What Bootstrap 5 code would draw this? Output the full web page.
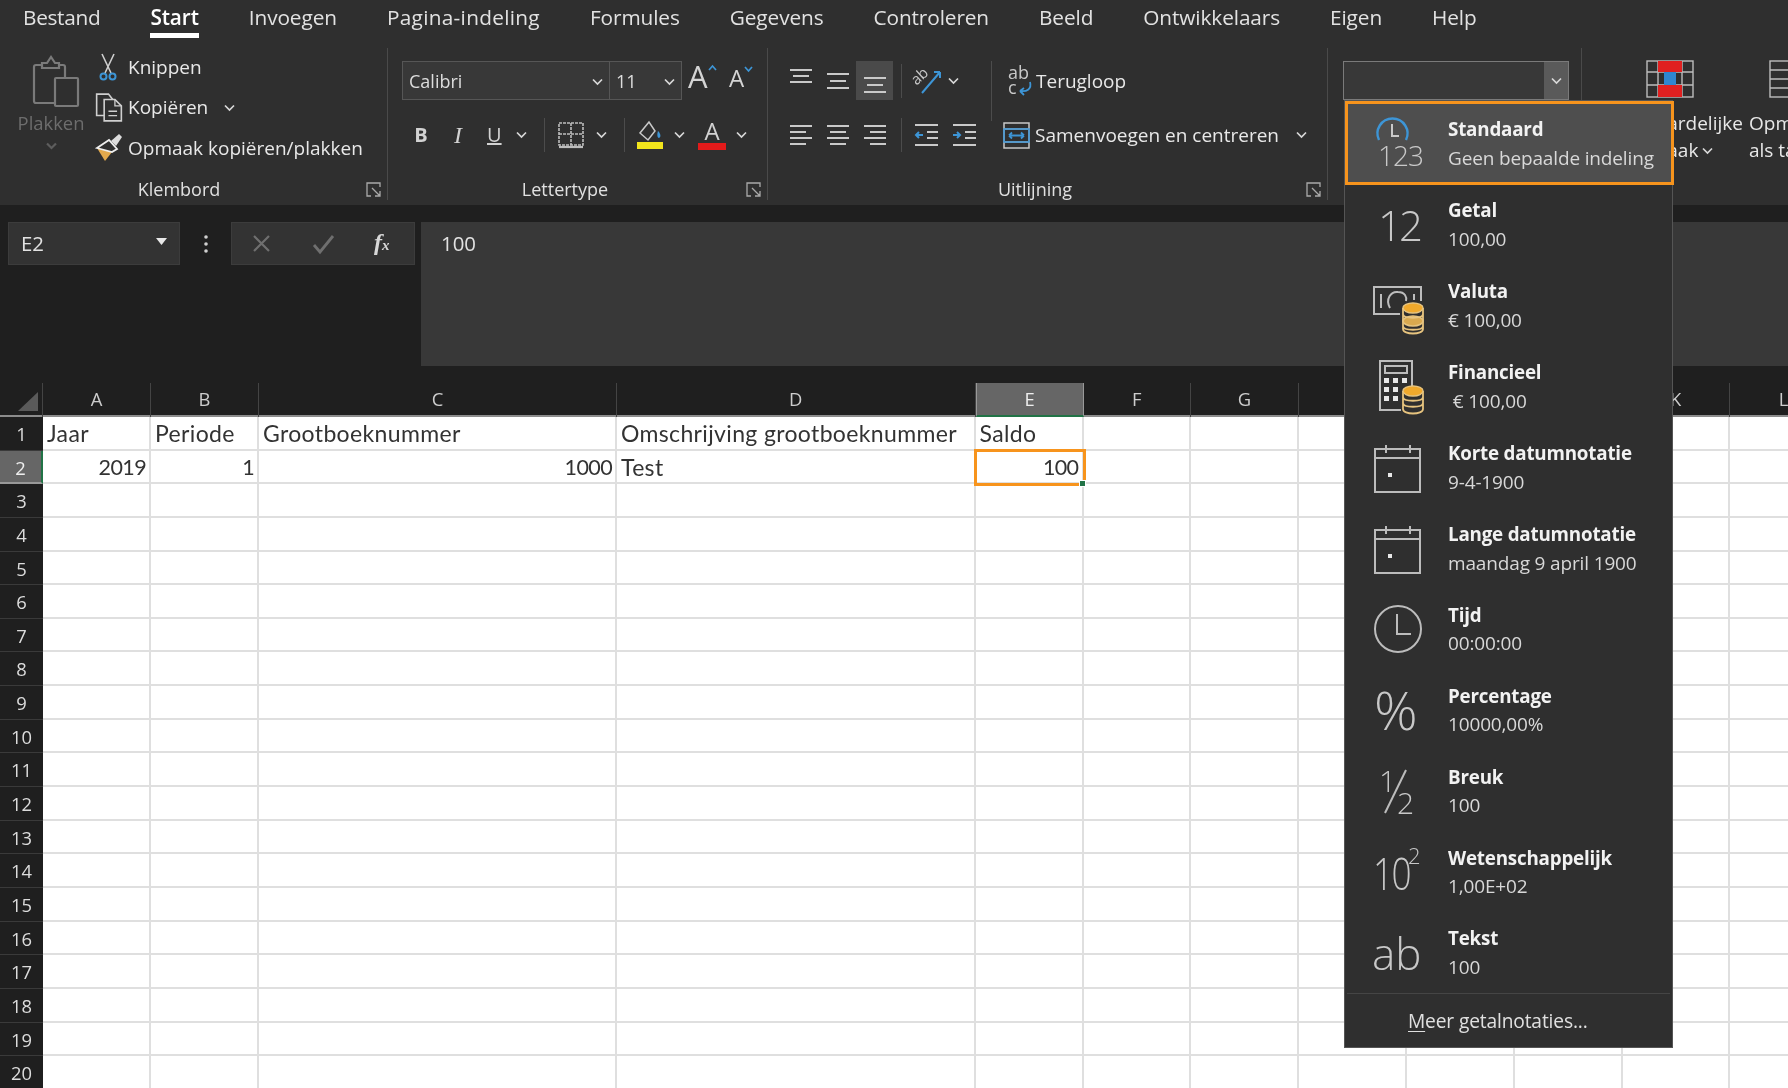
<!DOCTYPE html>
<html lang="nl">
<head>
<meta charset="utf-8">
<title>Excel</title>
<link href="https://cdn.jsdelivr.net/npm/bootstrap@5.3.0/dist/css/bootstrap.min.css" rel="stylesheet">
<style>
html,body{margin:0;height:1088px;overflow:hidden;background:#fff}
body{font-family:"Open Sans","Noto Sans",sans-serif;color:#e8e8e8;font-size:19px;line-height:1.2}
.app{width:1788px;height:1088px;overflow:hidden;filter:blur(.55px)}
svg{overflow:visible}
.chev{width:11px;height:8px;flex:none;fill:none;stroke:#d8d8d8;stroke-width:1.7}
/* tabs */
.tabs{height:48px;background:#2f2f2f;padding:4px 0 0 23px;gap:50px;font-size:20.8px;letter-spacing:-.1px}
.tab{height:34px;color:#e2e2e2;line-height:26px;white-space:nowrap}
.tab.on{color:#fff;border-bottom:5px solid #fff;font-weight:600}
.tab.tight{letter-spacing:-.3px}
.tab.wide{letter-spacing:.3px}
/* ribbon */
.ribbon{height:157px;background:#2f2f2f;overflow:hidden}
.rg{flex:none;height:152px;border-right:1px solid #4a4a4a}
.rg-body{height:129px}
.rg-label{height:23px;font-size:18px;color:#e0e0e0;padding-top:2px}
.rg-label span{flex:1;text-align:center;line-height:23px}
.launcher{width:16px;height:15px;margin-right:5px;flex:none;fill:none;stroke:#aaa;stroke-width:1.3}
.g-clip{width:388px}.g-font{width:380px}.g-align{width:560px}.g-num{width:254px}
.paste{width:68px;margin:7px 0 0 17px;color:#6d6d6d;font-size:18.4px}
.paste svg{fill:none;stroke:#7a7a7a;stroke-width:2.2;margin-left:16px;display:block}
.paste div{margin-top:4px;text-align:center}
.small-col{margin-left:10px;margin-top:-1px}
.small-row{height:40.5px;white-space:nowrap}
.small-row .ic{width:33px;flex:none;display:flex;justify-content:flex-start}
.combo{height:39px;background:#383838;border:1.5px solid #565656;color:#ddd;font-size:18px;padding-top:2px!important}
.combo.font{width:208px;padding:0 6px}.combo.size{width:72px;padding:0 6px;border-left:0}
.combo .chev{margin-left:auto}
.row1{height:39px;margin-top:13px}
.row2{height:30px;margin-top:20px}
.sep{width:1px;height:34px;background:#4c4c4c;flex:none}
.grow{line-height:1;color:#d4d4d4}
.fmt{width:14px;text-align:center;font-family:"Liberation Serif",serif;font-size:24px;color:#d2d2d2;line-height:28px}
.al{width:37px;height:39px;display:flex;align-items:center;justify-content:center;flex:none}
.al.on{background:#4a4a4a}
.al svg{fill:none;stroke:#c9c9c9;stroke-width:2.2}
.numcombo{width:226px;height:39px;margin:13px 0 0 15px;background:#383838;border:1.5px solid #7a7a7a}
.numcombo b{width:24px;background:#5a5a5a;margin-left:auto;display:flex;align-items:center;justify-content:center}
.bigbtn{flex:none;text-align:center;font-size:19px;line-height:27px;padding-top:12px;white-space:nowrap}
.bigbtn svg.big{display:block;margin:0 auto 12px}
/* formula bar */
.fx{height:178px;background:#1f1f1f;padding:17px 0 17px 8px;color:#e2e2e2;font-size:20.4px}
.namebox{width:172px;height:43px;background:#333;padding:0 12px;border:1px solid #3c3c3c}
.dots{width:51px;height:43px}
.fxbtns{width:184px;height:43px;background:#333;border:1px solid #3c3c3c}
.fxinput{flex:1;height:144px;margin-left:6px;background:#383838;padding:9px 20px;line-height:24px}
/* sheet */
.sheet{background:#1f1f1f}
.line{display:grid;grid-template-columns:43px 108px 108px 358px 358.5px 108px 107.5px 108px 108px 107.5px 108px 107.5px 108px;width:1838px}
.head{height:34px;border-bottom:2px solid #8c8c8c}
.head span{text-align:center;color:#cdcdcd;font-size:18.4px;line-height:32px;border-right:1.5px solid #444}
.head .sel{background:#666;color:#eee;border-bottom:2px solid #217346;height:34px;border-left:1.5px solid #999;border-right:1.5px solid #999}
.corner{padding:9px 0 0 18px}
.corner svg{display:block;fill:#5a5a5a}
.line.r{height:33.65px}
.r>span{height:33.65px;background:#fff;color:#333;border-right:2px solid #dfdfdf;border-bottom:2px solid #dfdfdf;padding:0 4px;line-height:33px;white-space:nowrap;position:relative;font-family:Lato,"Open Sans",sans-serif;font-size:23px;letter-spacing:.35px}
.r>span.n{text-align:right;font-size:21.5px;letter-spacing:-.6px;padding-right:3px}
.r>span.rh{background:#1f1f1f;color:#dcdcdc;text-align:center;padding:0;border-right:0;border-bottom:1.5px solid #3a3a3a;font-family:"Open Sans",sans-serif;font-size:18.4px;letter-spacing:0}
.r>span.rh.sel{background:#666;color:#eee;border-right:2px solid #217346;border-bottom:2px solid #999}
.cellsel{outline:3px solid #f7941d;outline-offset:-1px;z-index:2}
.handle{position:absolute;right:-4px;bottom:-5px;width:7px;height:7px;background:#217346;border:1px solid #fff}
/* number-format menu */
.menu-num{position:absolute;left:1344px;top:100px;width:329px;height:948px;margin:0;padding:0;background:#2f2f2f;border:1px solid #555;border-radius:0;color:#e6e6e6;z-index:5;display:block}
.menu-num .dropdown-item{height:80.9px;padding:0 0 0 28px;color:inherit;white-space:nowrap;background:transparent}
.menu-num .dropdown-item.cur{height:83.5px;width:calc(100% + 2px);background:#4e4e4e;border:3px solid #f7941d;padding:2px 0 0 25px}
.mi-ic{width:52px;height:56px;flex:none;margin-right:23px;overflow:visible;fill:none;stroke:#bcbcbc;stroke-width:2}
.mi-ic text{fill:#c8c8c8;stroke:none;font-family:"Open Sans",sans-serif;font-weight:300}
.mi-t{font-weight:700;font-size:18.8px;line-height:28.5px;color:#f2f2f2;letter-spacing:-.2px}
.mi-s{font-size:19px;line-height:28.5px;color:#d8d8d8;letter-spacing:-.15px}
.menu-sep{border-top:1px solid #454545;margin:0 0 0 2px;width:323px}
.menu-more{height:51px;line-height:54px;padding-left:63px;font-size:19.2px;color:#e0e0e0;letter-spacing:-.15px}
.menu-more u{text-underline-offset:3px}
</style>
</head>
<body>
<div class="app position-relative">

<nav class="tabs d-flex">
  <span class="tab tight">Bestand</span><span class="tab on">Start</span><span class="tab">Invoegen</span><span class="tab wide">Pagina-indeling</span><span class="tab">Formules</span><span class="tab">Gegevens</span><span class="tab">Controleren</span><span class="tab">Beeld</span><span class="tab">Ontwikkelaars</span><span class="tab">Eigen</span><span class="tab">Help</span>
</nav>

<div class="ribbon d-flex">
  <!-- Klembord -->
  <section class="rg g-clip d-flex flex-column">
    <div class="rg-body d-flex">
      <div class="paste">
        <svg width="47" height="53" viewBox="0 0 47 53"><path d="M22 48H3a2 2 0 0 1-2-2V12a2 2 0 0 1 2-2h6M26 10h4a2 2 0 0 1 2 2v10"/><path d="M9 13V8h5l4-6 4 6h4v5z"/><rect x="22" y="23" width="23" height="28" rx="1"/></svg>
        <div>Plakken</div>
        <div class="mt-2 d-flex justify-content-center"><svg class="chev m-0" viewBox="0 0 11 8" style="stroke:#5d5d5d"><path d="M1 1.5l4.5 4.5L10 1.5"/></svg></div>
      </div>
      <div class="small-col d-flex flex-column">
        <div class="small-row d-flex align-items-center"><span class="ic"><svg style="margin-left:4px" width="18" height="28" viewBox="0 0 18 28" fill="none" stroke="#cfcfcf" stroke-width="1.6"><path d="M3 1l9 19M15 1L6 20"/><circle cx="4.5" cy="23.5" r="3" stroke="#3d95d6" stroke-width="2"/><circle cx="13.5" cy="23.5" r="3" stroke="#3d95d6" stroke-width="2"/></svg></span>Knippen</div>
        <div class="small-row d-flex align-items-center"><span class="ic"><svg width="28" height="29" viewBox="1 1 25 27" fill="none" stroke="#cfcfcf" stroke-width="1.5"><path d="M9 22H2V2h11l4 5"/><path d="M9 7h10l6 6v14H9z"/><path d="M19 7v6h6M13 18h8M13 22h8" stroke-width="1.2"/></svg></span>Kopiëren<svg class="chev ms-3" viewBox="0 0 11 8"><path d="M1 1.5l4.5 4.5L10 1.5"/></svg></div>
        <div class="small-row d-flex align-items-center"><span class="ic"><svg width="28" height="28" viewBox="0 0 28 28" fill="none"><path d="M2 14l8 13 7-9z" fill="#e2a94d"/><path d="M2 14L14 6l8 9-5 3z" fill="#2f2f2f" stroke="#eee" stroke-width="1.8"/><path d="M16 7l8-7 3 3-6 9z" fill="#dcdcdc"/></svg></span>Opmaak kopiëren/plakken</div>
      </div>
    </div>
    <div class="rg-label d-flex align-items-center"><span class="me-2">Klembord</span><svg class="launcher" viewBox="0 0 16 15"><path d="M14 5V1H1v13h4M6 6l8 8M14 9v5H9"/></svg></div>
  </section>

  <!-- Lettertype -->
  <section class="rg g-font d-flex flex-column">
    <div class="rg-body ps-3">
      <div class="row1 d-flex align-items-center" style="margin-left:-2px">
        <div class="combo font d-flex align-items-center">Calibri<svg class="chev" viewBox="0 0 11 8"><path d="M1 1.5l4.5 4.5L10 1.5"/></svg></div>
        <div class="combo size d-flex align-items-center">11<svg class="chev" viewBox="0 0 11 8"><path d="M1 1.5l4.5 4.5L10 1.5"/></svg></div>
        <span class="grow d-flex align-items-start" style="width:38px;margin:-8px 0 0 6px;font-size:31px">A<svg width="9" height="6" viewBox="0 0 9 6" class="mt-1" fill="none" stroke="#3d95d6" stroke-width="1.7"><path d="M1 5l3.5-4L8 5"/></svg></span>
        <span class="grow d-flex align-items-start" style="margin:-6px 0 0 3px;font-size:24px">A<svg width="9" height="6" viewBox="0 0 9 6" fill="none" stroke="#3d95d6" stroke-width="1.7"><path d="M1 1l3.5 4L8 1"/></svg></span>
      </div>
      <div class="row2 d-flex align-items-center" style="padding-left:10px">
        <span class="fmt fw-bold" style="font-family:'Open Sans',sans-serif;font-size:20px">B</span>
        <span class="fmt fst-italic" style="margin-left:23px">I</span>
        <span class="fmt text-decoration-underline" style="margin-left:22px;font-family:'Open Sans',sans-serif;font-size:20px">U</span>
        <svg class="chev" style="margin-left:15px" viewBox="0 0 11 8"><path d="M1 1.5l4.5 4.5L10 1.5"/></svg>
        <span class="sep" style="margin-left:17px"></span>
        <svg style="margin-left:13px" width="26" height="27" viewBox="0 0 26 27" fill="none" stroke="#bdbdbd" stroke-width="1.6"><path d="M1 1h24v22H1z" stroke-dasharray="3 1"/><path d="M13 1v22M1 12h24" stroke-dasharray="3 1"/><path d="M1 25h24" stroke-width="2.2"/></svg>
        <svg class="chev" style="margin-left:12px" viewBox="0 0 11 8"><path d="M1 1.5l4.5 4.5L10 1.5"/></svg>
        <span class="sep" style="margin-left:17px"></span>
        <svg style="margin-left:12px" width="26" height="30" viewBox="0 0 26 30" fill="none" stroke="#c9c9c9" stroke-width="1.5"><path d="M12 2L3 13l8 7 7-9z"/><path d="M21 11c3 3 3 6 1 7-2 0-2-4-1-7z" fill="#3d95d6" stroke="none"/><rect y="22" width="26" height="7" fill="#f2e51c" stroke="none"/></svg>
        <svg class="chev" style="margin-left:11px" viewBox="0 0 11 8"><path d="M1 1.5l4.5 4.5L10 1.5"/></svg>
        <span class="d-flex flex-column align-items-center" style="width:28px;margin-left:13px;line-height:22px;font-size:24px;color:#d2d2d2">A<i class="d-block" style="width:28px;height:7px;background:#e31a1a;margin-top:1px"></i></span>
        <svg class="chev" style="margin-left:10px" viewBox="0 0 11 8"><path d="M1 1.5l4.5 4.5L10 1.5"/></svg>
      </div>
    </div>
    <div class="rg-label d-flex align-items-center"><span class="me-1">Lettertype</span><svg class="launcher" viewBox="0 0 16 15"><path d="M14 5V1H1v13h4M6 6l8 8M14 9v5H9"/></svg></div>
  </section>

  <!-- Uitlijning -->
  <section class="rg g-align d-flex flex-column">
    <div class="rg-body" style="padding-left:14px">
      <div class="row1 d-flex align-items-center">
        <span class="al"><svg width="24" height="26" viewBox="0 0 24 26"><path d="M1 2h22M4 8h16M1 14h22"/></svg></span>
        <span class="al"><svg width="24" height="26" viewBox="0 0 24 26"><path d="M1 6h22M4 13h16M1 20h22"/></svg></span>
        <span class="al on"><svg width="24" height="26" viewBox="0 0 24 26"><path d="M1 10h22M4 17h16M1 24h22"/></svg></span>
        <span class="sep" style="margin-left:8px"></span>
        <svg style="margin-left:11px" width="30" height="28" viewBox="0 0 30 28" fill="none"><text x="0" y="14" font-size="15" fill="#c9c9c9" transform="rotate(-42 8 12)">ab</text><path d="M9 26L27 5M27 5h-6M27 5v6" stroke="#3d95d6" stroke-width="2"/></svg>
        <svg class="chev" style="margin-left:5px" viewBox="0 0 11 8"><path d="M1 1.5l4.5 4.5L10 1.5"/></svg>
        <span class="sep" style="margin-left:32px;height:60px;align-self:flex-start"></span>
        <svg style="margin-left:15px" width="26" height="32" viewBox="0 0 26 32" fill="none" stroke="#3d95d6" stroke-width="1.8"><text x="1" y="14" font-size="18" fill="#c9c9c9" stroke="none">ab</text><text x="1" y="29" font-size="18" fill="#c9c9c9" stroke="none">c</text><path d="M23 17c2 7-3 10-10 9M13 26l4-3M13 26l4 4"/></svg>
        <span style="margin-left:3px;padding-top:2px">Terugloop</span>
      </div>
      <div class="row2 d-flex align-items-center">
        <span class="al"><svg width="24" height="26" viewBox="0 0 24 26"><path d="M1 4h22M1 10h16M1 16h22M1 22h16"/></svg></span>
        <span class="al"><svg width="24" height="26" viewBox="0 0 24 26"><path d="M1 4h22M4 10h16M1 16h22M4 22h16"/></svg></span>
        <span class="al"><svg width="24" height="26" viewBox="0 0 24 26"><path d="M1 4h22M7 10h16M1 16h22M7 22h16"/></svg></span>
        <span class="sep" style="margin-left:8px"></span>
        <svg style="margin-left:12px" width="25" height="26" viewBox="0 0 25 26" fill="none" stroke="#c9c9c9" stroke-width="2"><path d="M1 3h23M13 10h11M13 16h11M1 23h23"/><path d="M9 13H2M5 10l-3 3 3 3" stroke="#3d95d6"/></svg>
        <svg style="margin-left:13px" width="25" height="26" viewBox="0 0 25 26" fill="none" stroke="#c9c9c9" stroke-width="2"><path d="M1 3h23M13 10h11M13 16h11M1 23h23"/><path d="M1 13h7M5 10l3 3-3 3" stroke="#3d95d6"/></svg>
        <span class="sep" style="margin-left:14px;visibility:hidden"></span>
        <svg style="margin-left:11px" width="27" height="27" viewBox="0 0 27 27" fill="none" stroke="#c9c9c9" stroke-width="1.5"><rect x="1" y="1" width="25" height="25"/><path d="M1 7h25M1 20h25"/><rect x="1" y="7" width="25" height="13" stroke="#3d95d6"/><path d="M6 13.5h15M6 13.5l3-3M6 13.5l3 3M21 13.5l-3-3M21 13.5l-3 3" stroke="#3d95d6" stroke-width="1.8"/></svg>
        <span style="margin-left:5px;white-space:nowrap">Samenvoegen en centreren</span>
        <svg class="chev" style="margin-left:17px" viewBox="0 0 11 8"><path d="M1 1.5l4.5 4.5L10 1.5"/></svg>
      </div>
    </div>
    <div class="rg-label d-flex align-items-center"><span class="me-1">Uitlijning</span><svg class="launcher" viewBox="0 0 16 15"><path d="M14 5V1H1v13h4M6 6l8 8M14 9v5H9"/></svg></div>
  </section>

  <!-- Getal -->
  <section class="rg g-num">
    <div class="numcombo d-flex"><b><svg class="chev" viewBox="0 0 11 8"><path d="M1 1.5l4.5 4.5L10 1.5"/></svg></b></div>
  </section>

  <!-- Stijlen -->
  <section class="d-flex" style="padding-left:18px">
    <div class="bigbtn" style="width:140px">
      <svg class="big" width="48" height="38" viewBox="0 0 48 38" fill="none" stroke="#bdbdbd" stroke-width="1.4"><rect x="1" y="1" width="46" height="36"/><path d="M12 1v36M36 1v36M1 12h46M1 25h46"/><rect x="12" y="1" width="24" height="11" fill="#e02020" stroke="none"/><rect x="12" y="25" width="24" height="12" fill="#e02020" stroke="none"/><rect x="18" y="12" width="12" height="13" fill="#2f86d0" stroke="none"/></svg>
      Voorwaardelijke<br><span class="d-inline-flex align-items-center gap-1">opmaak<svg class="chev" viewBox="0 0 11 8"><path d="M1 1.5l4.5 4.5L10 1.5"/></svg></span>
    </div>
    <div class="bigbtn" style="width:86px;margin-left:9px">
      <svg class="big" width="46" height="38" viewBox="0 0 46 38" fill="none" stroke="#bdbdbd" stroke-width="1.4"><rect x="1" y="1" width="44" height="36"/><path d="M1 10h44M1 19h44M1 28h44M23 1v36"/><path d="M23 19h22" stroke="#3d95d6" stroke-width="2"/></svg>
      Opmaken<br><span class="d-inline-flex align-items-center gap-1">als tabel<svg class="chev" viewBox="0 0 11 8"><path d="M1 1.5l4.5 4.5L10 1.5"/></svg></span>
    </div>
  </section>
</div>

<!-- Formulebalk -->
<div class="fx d-flex">
  <div class="namebox d-flex align-items-center justify-content-between">E2<svg width="11" height="7" class="mb-1" viewBox="0 0 13 8" fill="#e8e8e8"><path d="M0 0h13L6.5 8z"/></svg></div>
  <div class="dots d-flex flex-column align-items-center justify-content-center gap-1"><svg width="4" height="18" viewBox="0 0 4 18" fill="#d0d0d0"><circle cx="2" cy="2" r="1.8"/><circle cx="2" cy="9" r="1.8"/><circle cx="2" cy="16" r="1.8"/></svg></div>
  <div class="fxbtns d-flex align-items-center">
    <svg style="margin-left:20px" width="19" height="19" viewBox="0 0 19 19" fill="none" stroke="#6f6f6f" stroke-width="2.2"><path d="M2 2l15 15M17 2L2 17"/></svg>
    <svg style="margin-left:41px" width="23" height="20" viewBox="0 0 23 20" fill="none" stroke="#6f6f6f" stroke-width="2.8"><path d="M2 11l6 7L21 2"/></svg>
    <span class="fst-italic fw-bold" style="margin-left:39px;font-family:'Liberation Serif',serif;font-size:24px;line-height:24px;color:#d8d8d8">f<small style="font-size:15px">x</small></span>
  </div>
  <div class="fxinput">100</div>
</div>

<!-- Werkblad -->
<div class="sheet">
  <div class="line head">
    <span class="corner"><svg width="20" height="19" viewBox="0 0 20 19"><path d="M20 0v19H0z"/></svg></span>
    <span>A</span><span>B</span><span>C</span><span>D</span><span class="sel">E</span><span>F</span><span>G</span><span></span><span></span><span></span><span>K</span><span>L</span>
  </div>
  <div class="line r"><span class="rh">1</span><span>Jaar</span><span>Periode</span><span>Grootboeknummer</span><span>Omschrijving grootboeknummer</span><span>Saldo</span><span></span><span></span><span></span><span></span><span></span><span></span><span></span></div>
  <div class="line r"><span class="rh sel">2</span><span class="n">2019</span><span class="n">1</span><span class="n">1000</span><span>Test</span><span class="n cellsel">100<i class="handle"></i></span><span></span><span></span><span></span><span></span><span></span><span></span><span></span></div>
  <div class="line r"><span class="rh">3</span><span></span><span></span><span></span><span></span><span></span><span></span><span></span><span></span><span></span><span></span><span></span><span></span></div>
  <div class="line r"><span class="rh">4</span><span></span><span></span><span></span><span></span><span></span><span></span><span></span><span></span><span></span><span></span><span></span><span></span></div>
  <div class="line r"><span class="rh">5</span><span></span><span></span><span></span><span></span><span></span><span></span><span></span><span></span><span></span><span></span><span></span><span></span></div>
  <div class="line r"><span class="rh">6</span><span></span><span></span><span></span><span></span><span></span><span></span><span></span><span></span><span></span><span></span><span></span><span></span></div>
  <div class="line r"><span class="rh">7</span><span></span><span></span><span></span><span></span><span></span><span></span><span></span><span></span><span></span><span></span><span></span><span></span></div>
  <div class="line r"><span class="rh">8</span><span></span><span></span><span></span><span></span><span></span><span></span><span></span><span></span><span></span><span></span><span></span><span></span></div>
  <div class="line r"><span class="rh">9</span><span></span><span></span><span></span><span></span><span></span><span></span><span></span><span></span><span></span><span></span><span></span><span></span></div>
  <div class="line r"><span class="rh">10</span><span></span><span></span><span></span><span></span><span></span><span></span><span></span><span></span><span></span><span></span><span></span><span></span></div>
  <div class="line r"><span class="rh">11</span><span></span><span></span><span></span><span></span><span></span><span></span><span></span><span></span><span></span><span></span><span></span><span></span></div>
  <div class="line r"><span class="rh">12</span><span></span><span></span><span></span><span></span><span></span><span></span><span></span><span></span><span></span><span></span><span></span><span></span></div>
  <div class="line r"><span class="rh">13</span><span></span><span></span><span></span><span></span><span></span><span></span><span></span><span></span><span></span><span></span><span></span><span></span></div>
  <div class="line r"><span class="rh">14</span><span></span><span></span><span></span><span></span><span></span><span></span><span></span><span></span><span></span><span></span><span></span><span></span></div>
  <div class="line r"><span class="rh">15</span><span></span><span></span><span></span><span></span><span></span><span></span><span></span><span></span><span></span><span></span><span></span><span></span></div>
  <div class="line r"><span class="rh">16</span><span></span><span></span><span></span><span></span><span></span><span></span><span></span><span></span><span></span><span></span><span></span><span></span></div>
  <div class="line r"><span class="rh">17</span><span></span><span></span><span></span><span></span><span></span><span></span><span></span><span></span><span></span><span></span><span></span><span></span></div>
  <div class="line r"><span class="rh">18</span><span></span><span></span><span></span><span></span><span></span><span></span><span></span><span></span><span></span><span></span><span></span><span></span></div>
  <div class="line r"><span class="rh">19</span><span></span><span></span><span></span><span></span><span></span><span></span><span></span><span></span><span></span><span></span><span></span><span></span></div>
  <div class="line r"><span class="rh">20</span><span></span><span></span><span></span><span></span><span></span><span></span><span></span><span></span><span></span><span></span><span></span><span></span></div>
</div>

<!-- Getalnotatie-menu -->
<div class="dropdown-menu show menu-num">
  <div class="dropdown-item cur d-flex align-items-center">
    <svg class="mi-ic" viewBox="0 0 52 56"><path d="M6 24A15 15 0 1 1 33 24" stroke="#3d95d6" stroke-width="2.4"/><path d="M19 8v12h7" stroke="#c9c9c9"/><text x="5" y="50" font-size="28" letter-spacing="-1">123</text></svg>
    <div><div class="mi-t">Standaard</div><div class="mi-s">Geen bepaalde indeling</div></div>
  </div>
  <div class="dropdown-item d-flex align-items-center">
    <svg class="mi-ic" viewBox="0 0 52 56"><text x="5" y="44" font-size="42" letter-spacing="-3">12</text></svg>
    <div><div class="mi-t">Getal</div><div class="mi-s">100,00</div></div>
  </div>
  <div class="dropdown-item d-flex align-items-center">
    <svg class="mi-ic" viewBox="0 0 52 56"><path d="M27 36H1V9h47v14"/><path d="M8 16v14M41 16v6"/><path d="M17 30c-5-9 1-17 8-16 7 0 9 5 8 9"/><g fill="#d9a94f" stroke="#e7c47f" stroke-width="1.6"><ellipse cx="40" cy="43" rx="10" ry="5"/></g><g fill="none" stroke="#e7c47f" stroke-width="1.8"><path d="M30 43v8c0 6 20 6 20 0v-8M30 48c0 5 20 5 20 0"/></g><ellipse cx="40" cy="30" rx="10" ry="5" fill="#f0a92c" stroke="#e7c47f" stroke-width="1.4"/><path d="M30 30v13M50 30v13M30 36c0 5 20 5 20 0" stroke="#e7c47f" stroke-width="1.8"/></svg>
    <div><div class="mi-t">Valuta</div><div class="mi-s">€ 100,00</div></div>
  </div>
  <div class="dropdown-item d-flex align-items-center">
    <svg class="mi-ic" viewBox="0 0 52 56"><path d="M28 51H7V2h32v28"/><rect x="12" y="7" width="22" height="7"/><g fill="#e8e8e8" stroke="none"><rect x="11" y="19" width="5" height="5"/><rect x="20" y="19" width="5" height="5"/><rect x="29" y="19" width="5" height="5"/><rect x="11" y="28" width="5" height="5"/><rect x="20" y="28" width="5" height="5"/><rect x="11" y="37" width="5" height="5"/><rect x="20" y="37" width="5" height="5"/></g><path d="M30 32v18c0 6 20 6 20 0V32M30 38c0 5 20 5 20 0M30 44c0 5 20 5 20 0" stroke="#e7c47f" stroke-width="1.8" fill="#2f2f2f"/><ellipse cx="40" cy="32" rx="10" ry="5" fill="#f0a92c" stroke="#e7c47f" stroke-width="1.4"/></svg>
    <div><div class="mi-t">Financieel</div><div class="mi-s">&nbsp;€ 100,00</div></div>
  </div>
  <div class="dropdown-item d-flex align-items-center">
    <svg class="mi-ic" viewBox="0 0 52 56"><rect x="2" y="9" width="45" height="43"/><path d="M2 18h45M13 5v8M37 5v8"/><rect x="15" y="33" width="4" height="4" fill="#e8e8e8" stroke="none"/></svg>
    <div><div class="mi-t">Korte datumnotatie</div><div class="mi-s">9-4-1900</div></div>
  </div>
  <div class="dropdown-item d-flex align-items-center">
    <svg class="mi-ic" viewBox="0 0 52 56"><rect x="2" y="9" width="45" height="43"/><path d="M2 18h45M13 5v8M37 5v8"/><rect x="15" y="33" width="4" height="4" fill="#e8e8e8" stroke="none"/></svg>
    <div><div class="mi-t">Lange datumnotatie</div><div class="mi-s">maandag 9 april 1900</div></div>
  </div>
  <div class="dropdown-item d-flex align-items-center">
    <svg class="mi-ic" viewBox="0 0 52 56"><circle cx="25" cy="28" r="23"/><path d="M24 13v20h14"/></svg>
    <div><div class="mi-t">Tijd</div><div class="mi-s">00:00:00</div></div>
  </div>
  <div class="dropdown-item d-flex align-items-center">
    <svg class="mi-ic" viewBox="0 0 52 56"><text x="1" y="48" font-size="54">%</text></svg>
    <div><div class="mi-t">Percentage</div><div class="mi-s">10000,00%</div></div>
  </div>
  <div class="dropdown-item d-flex align-items-center">
    <svg class="mi-ic" viewBox="0 0 52 56"><text x="6" y="29" font-size="30">1</text><path d="M12 50L33 7" stroke-width="2"/><text x="24" y="51" font-size="30">2</text></svg>
    <div><div class="mi-t">Breuk</div><div class="mi-s">100</div></div>
  </div>
  <div class="dropdown-item d-flex align-items-center">
    <svg class="mi-ic" viewBox="0 0 52 56"><text transform="translate(0 46) scale(.8 1)" font-size="44" letter-spacing="-2">10</text><text x="35" y="20" font-size="22">2</text></svg>
    <div><div class="mi-t">Wetenschappelijk</div><div class="mi-s">1,00E+02</div></div>
  </div>
  <div class="dropdown-item d-flex align-items-center">
    <svg class="mi-ic" viewBox="0 0 52 56"><text x="-1" y="45" font-size="44">ab</text></svg>
    <div><div class="mi-t">Tekst</div><div class="mi-s">100</div></div>
  </div>
  <div class="menu-sep"></div>
  <div class="menu-more"><u>M</u>eer getalnotaties...</div>
</div>

</div>
<script src="https://cdn.jsdelivr.net/npm/bootstrap@5.3.0/dist/js/bootstrap.bundle.min.js"></script>
</body>
</html>
